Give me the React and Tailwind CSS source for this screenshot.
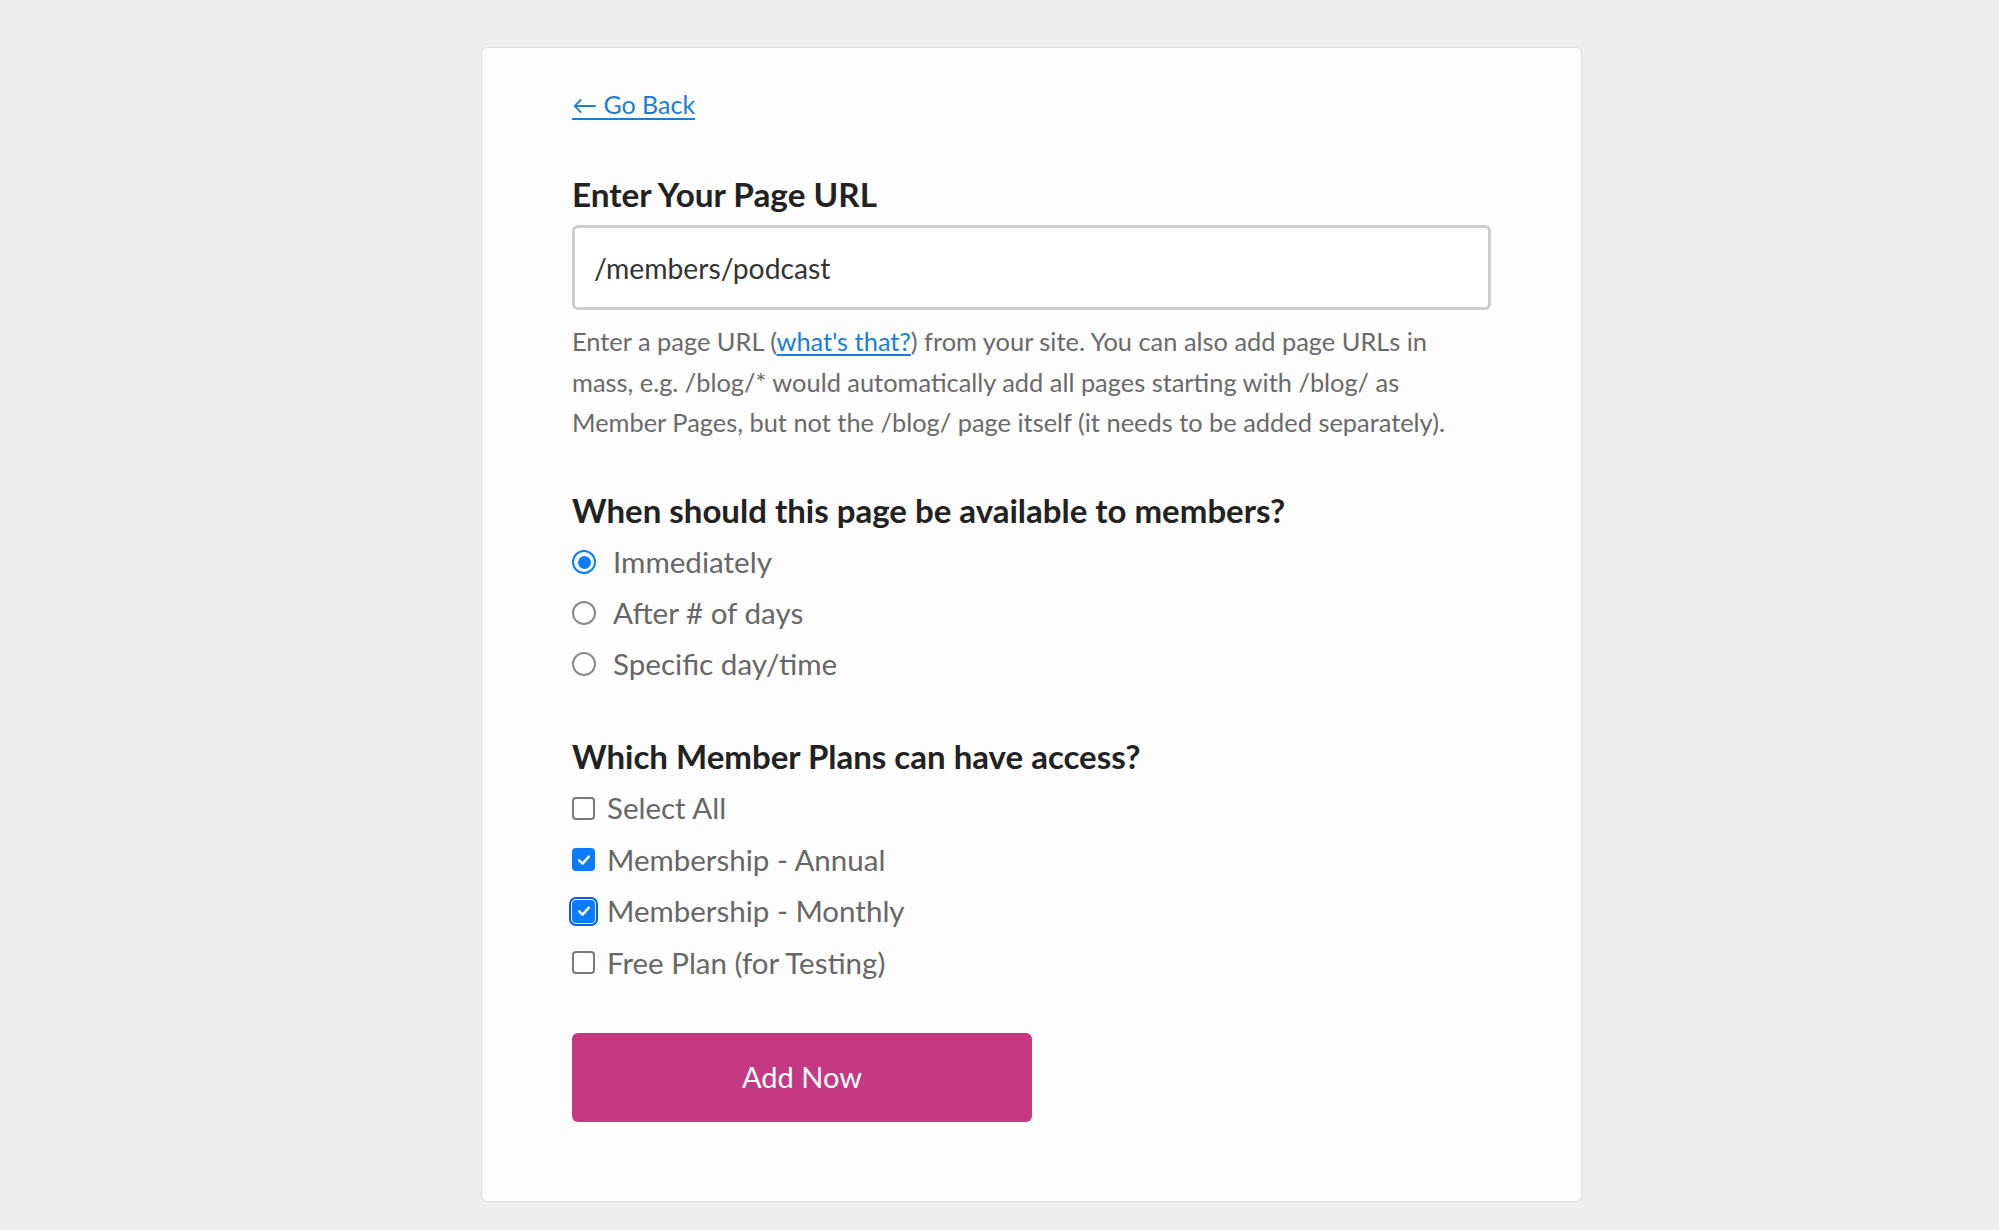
import React, { useState } from 'react';

const Radio = ({ checked, label, onClick }) => (
    <label onClick={onClick} className="flex items-center h-[51px] cursor-pointer">
        <span
            className={`flex items-center justify-center w-[24px] h-[24px] rounded-full border-2 bg-white ${checked ? 'border-[#0b7cff]' : 'border-[#8a8a8a]'}`}
        >
            {checked && <span className="w-[13px] h-[13px] rounded-full bg-[#0b7cff]" />}
        </span>
        <span className="ml-[17px] text-[29.6px] text-[#676767]">{label}</span>
    </label>
);

const Checkbox = ({ checked, focused, label, onClick }) => (
    <label onClick={onClick} className="flex items-center h-[51.5px] cursor-pointer">
        <span
            className={`flex items-center justify-center w-[23px] h-[23px] rounded-[4px] ${checked ? 'bg-[#0b7cff] border-2 border-[#0b7cff]' : 'bg-white border-2 border-[#7a7a7a]'} ${focused ? 'outline-2 outline-offset-[1px] outline-[#0a5fd0]' : ''}`}
        >
            {checked && (
                <svg viewBox="0 0 16 16" className="w-[16px] h-[16px]" fill="none">
                    <path d="M3.2 8.4 L6.6 11.6 L12.8 4.6" stroke="white" strokeWidth="2.4" strokeLinecap="round" strokeLinejoin="round" />
                </svg>
            )}
        </span>
        <span className="ml-[12px] text-[29.5px] text-[#676767]">{label}</span>
    </label>
);

const App = () => {
    const [url, setUrl] = useState('/members/podcast');
    const [when, setWhen] = useState('now');
    const [plans, setPlans] = useState({ all: false, annual: true, monthly: true, free: false });

    const togglePlan = (key) => setPlans({ ...plans, [key]: !plans[key] });

    return (
        <div className="min-h-[1230px] bg-[#eeeeef] pt-[47px]" style={{ fontFamily: 'Lato, "Open Sans", sans-serif' }}>
            <div className="w-[1101px] ml-[481px] bg-[#fdfdfd] border border-[#dedede] rounded-[6px] px-[90px] pt-[39px] pb-[79px]">
                {/* Go back link */}
                <a href="#" className="block w-fit text-[25px] leading-[34px] text-[#1b7dd3] underline underline-offset-[4px] decoration-[2px]">
                    ← Go Back
                </a>

                {/* Page URL */}
                <h2 className="mt-[53px] text-[33.3px] leading-[40px] font-bold text-[#222]">Enter Your Page URL</h2>
                <input
                    value={url}
                    onChange={(e) => setUrl(e.target.value)}
                    className="mt-[11px] block w-[919px] h-[85px] border-[3px] border-[#cdcdcd] rounded-[6px] bg-white px-[19px] text-[28.3px] text-[#333] outline-none"
                />
                <p className="mt-[11px] text-[25.4px] leading-[40.5px] text-[#6a6a6a] whitespace-nowrap">
                    Enter a page URL (<a href="#" className="text-[#1b7dd3] underline underline-offset-[3px]">what's that?</a>) from your site. You can also add page URLs in
                    <br />
                    mass, e.g. /blog/* would automatically add all pages starting with /blog/ as
                    <br />
                    Member Pages, but not the /blog/ page itself (it needs to be added separately).
                </p>

                {/* Availability */}
                <h2 className="mt-[47px] text-[33px] leading-[40px] font-bold text-[#222]">When should this page be available to members?</h2>
                <div className="mt-[7px] flex flex-col">
                    <Radio checked={when === 'now'} label="Immediately" onClick={() => setWhen('now')} />
                    <Radio checked={when === 'days'} label="After # of days" onClick={() => setWhen('days')} />
                    <Radio checked={when === 'date'} label="Specific day/time" onClick={() => setWhen('date')} />
                </div>

                {/* Plans */}
                <h2 className="mt-[46px] text-[33px] leading-[40px] font-bold text-[#222]">Which Member Plans can have access?</h2>
                <div className="mt-[7px] flex flex-col">
                    <Checkbox checked={plans.all} label="Select All" onClick={() => togglePlan('all')} />
                    <Checkbox checked={plans.annual} label="Membership - Annual" onClick={() => togglePlan('annual')} />
                    <Checkbox checked={plans.monthly} focused label="Membership - Monthly" onClick={() => togglePlan('monthly')} />
                    <Checkbox checked={plans.free} label="Free Plan (for Testing)" onClick={() => togglePlan('free')} />
                </div>

                <button className="mt-[44px] w-[460px] h-[89px] rounded-[6px] bg-[#c53882] text-white text-[29px]">
                    Add Now
                </button>
            </div>
        </div>
    );
};

export default App;
